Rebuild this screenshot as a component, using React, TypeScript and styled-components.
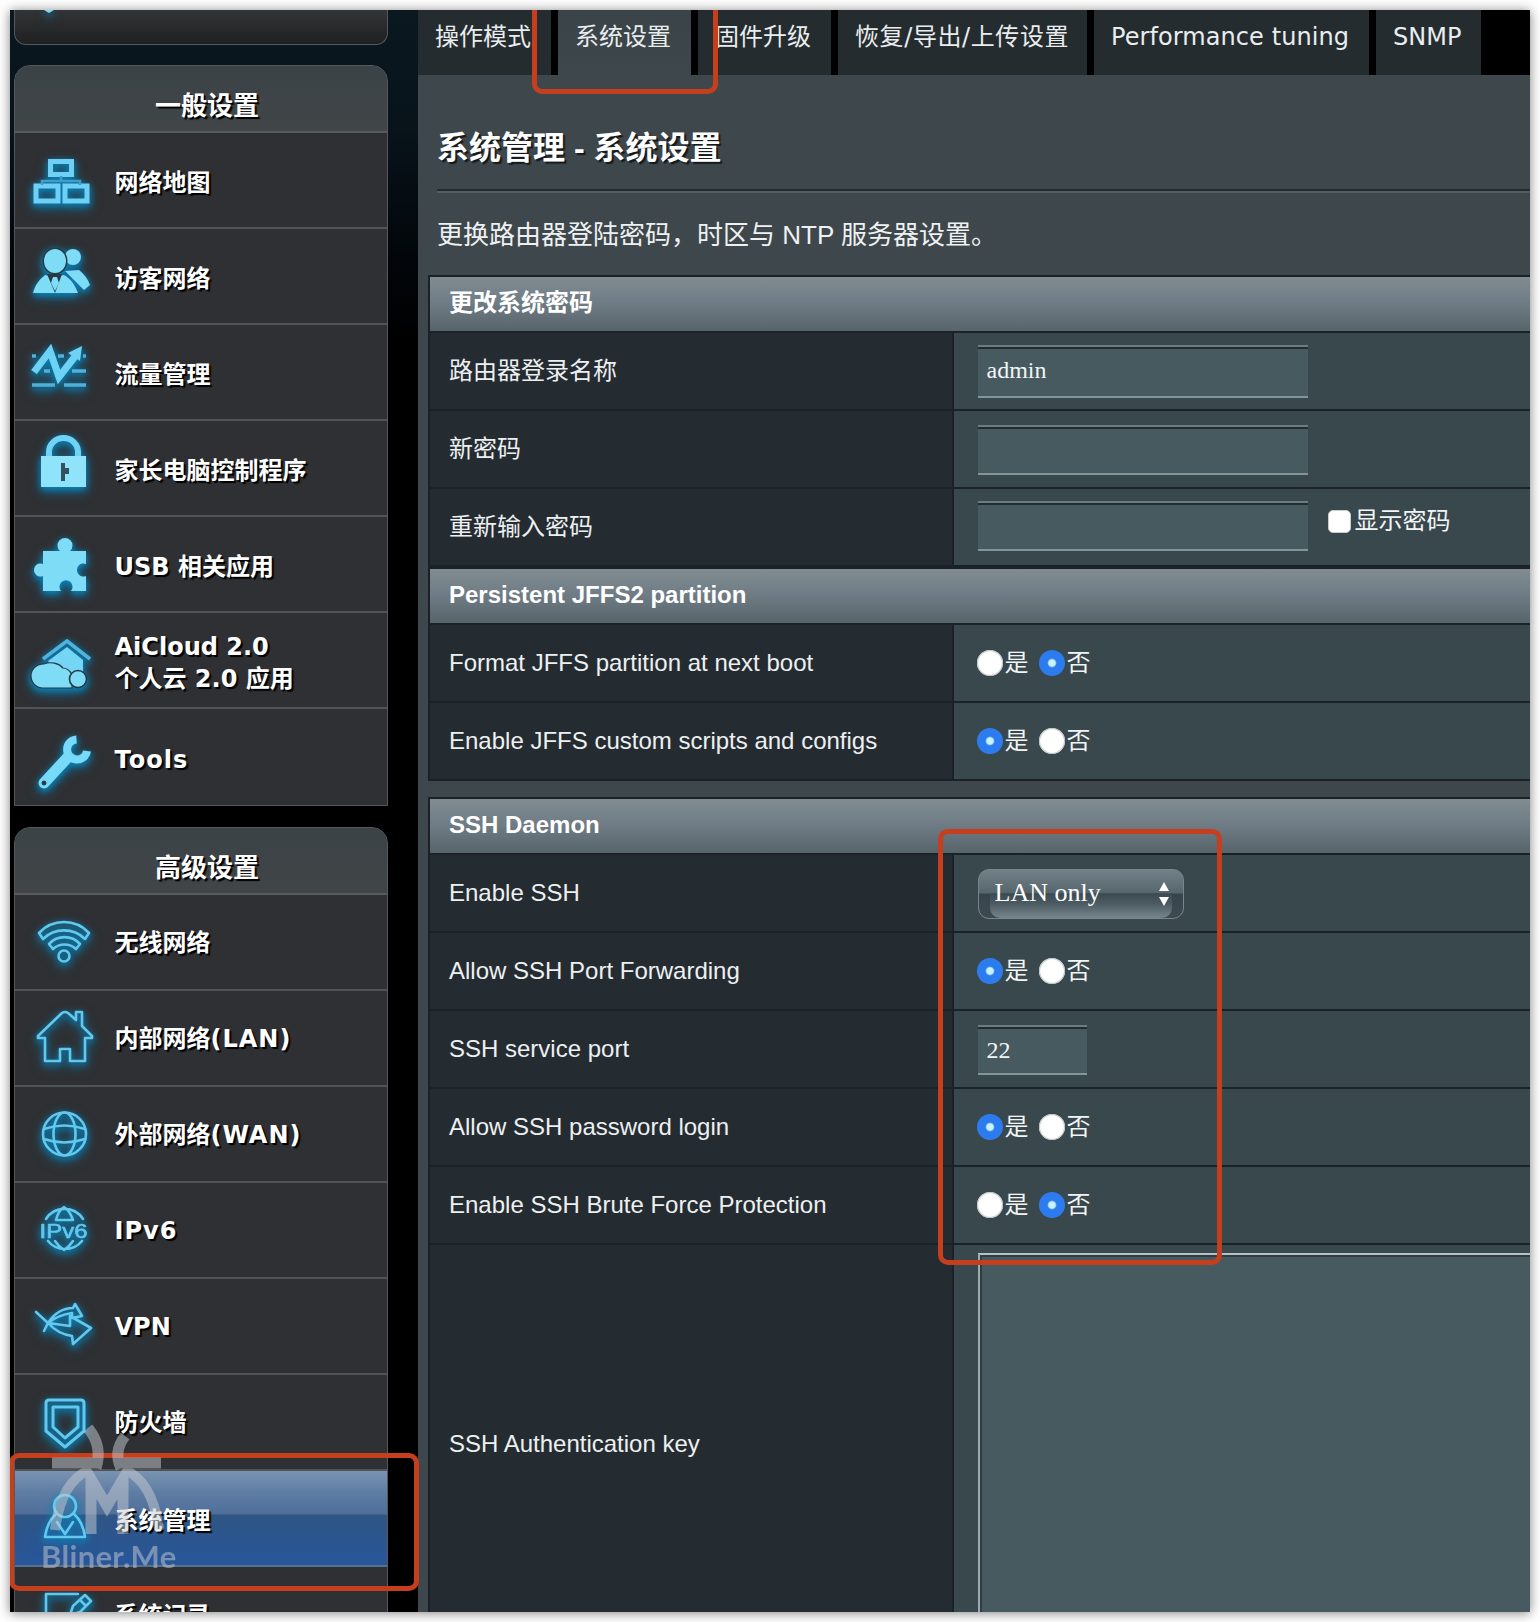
import React from 'react';
import styled, { createGlobalStyle, css } from 'styled-components';

const verdana = `"DejaVu Sans", "Noto Sans CJK SC", sans-serif`;
const arial = `"Liberation Sans", "Noto Sans CJK SC", sans-serif`;
const times = `"Liberation Serif", "Noto Sans CJK SC", serif`;

const GlobalStyle = createGlobalStyle`
  *, *::before, *::after { box-sizing: border-box; }
  html, body { margin: 0; background: #fff; }
  body { overflow: hidden; }
`;

const Page = styled.div`
  width: 1540px;
  height: 1622px;
  padding: 10px;
  overflow: hidden;
`;

const Frame = styled.div`
  position: relative;
  display: flex;
  width: 1520px;
  height: 1602px;
  overflow: hidden;
  background: #000;
  box-shadow: 0 1px 11px rgba(0, 0, 0, 0.5);
`;

/* ---------- sidebar ---------- */

const Sidebar = styled.aside`
  display: flex;
  flex-direction: column;
  flex: none;
  width: 408px;
  padding-left: 4px;
  background: linear-gradient(180deg, #0a181f, #08131a 120px, #02060a 250px, #000 330px);
`;

const Panel = styled.nav`
  flex: none;
  width: 374px;
  border: 1.5px solid #55595c;
  border-radius: 16px 16px 0 0;
  background: #2e3033;
  overflow: hidden;
`;

const TopPanel = styled.div`
  flex: none;
  width: 374px;
  height: 35px;
  margin-bottom: 20px;
  padding-left: 26px;
  border: 1.5px solid #55595c;
  border-top: 0;
  border-radius: 0 0 12px 12px;
  background: linear-gradient(180deg, #323436, #1f2021);
`;

const PanelTitle = styled.div`
  height: 67px;
  padding: 20px 0 0 12px;
  border-bottom: 2px solid #575b5e;
  background: linear-gradient(180deg, #3b4346, #414548);
  color: #fff;
  font: bold 26px/40px ${verdana};
  text-align: center;
  text-shadow: 2px 2px 1px #000;
`;

const Spacer = styled.div`
  flex: none;
  height: 21px;
`;

const Item = styled.a<{ $active?: boolean }>`
  display: flex;
  align-items: center;
  height: 96px;
  padding-left: 5px;
  border-bottom: 2px solid #505457;
  color: #fff;
  font: bold 24px/32px ${verdana};
  text-shadow: 2px 2px 1px #000;
  &:last-child {
    border-bottom: 0;
  }
  ${(p) =>
    p.$active &&
    css`
      background: linear-gradient(180deg, #7993b2 0, #5e7ca3 22px, #4f6f9a 43px, #2f5584 44px, #27569a 94px);
      border-color: #55718f;
    `}
`;

const ItemText = styled.span<{ $nudge: number }>`
  margin-left: 14.5px;
  padding-top: ${(p) => p.$nudge}px;
  white-space: pre;
`;

const Tracked = styled.span`
  letter-spacing: 1px;
`;

const Glyph = styled.svg`
  flex: none;
  width: 80px;
  height: 94px;
  overflow: visible;
  font-weight: normal;
  text-shadow: none;
  filter: drop-shadow(0 2px 3px #0a86bd) drop-shadow(0 3px 5px rgba(0, 130, 190, 0.6));
`;

/* ---------- main ---------- */

const Main = styled.main`
  display: flex;
  flex-direction: column;
  flex: none;
  width: 1112px;
  height: 1602px;
  background: #3e474b;
`;

const Tabs = styled.div`
  display: flex;
  flex: none;
  gap: 7px;
  height: 65px;
  background: #000;
`;

const Tab = styled.a<{ $width: number; $tracking: number; $active?: boolean }>`
  flex: none;
  width: ${(p) => p.$width}px;
  padding: 7px 0 0 17px;
  background: ${(p) => (p.$active ? 'linear-gradient(180deg, #3a4347, #3e474b)' : '#252c30')};
  color: #e9edee;
  font: 24px/40px ${verdana};
  letter-spacing: ${(p) => p.$tracking}px;
  white-space: nowrap;
`;

const Title = styled.h1`
  flex: none;
  margin: 0 0 0 19px;
  height: 116px;
  padding-top: 49px;
  border-bottom: 2px solid #222b30;
  box-shadow: 0 2px 0 #535e64;
  color: #fff;
  font: bold 32px/48px ${arial};
  text-shadow: 2px 2px 1px #14191c;
`;

const Description = styled.p`
  flex: none;
  margin: 0 0 0 19px;
  padding-top: 24px;
  height: 84px;
  color: #eef1f2;
  font: 26px/40px ${arial};
  white-space: nowrap;
`;

const Table = styled.section`
  flex: none;
  margin: 0 0 16px 10px;
  border: 2px solid #1b2227;
  border-right: 0;
  border-bottom: 0;
`;

const SectionHead = styled.h2<{ $spaced?: boolean }>`
  margin: 0;
  height: ${(p) => (p.$spaced ? 58 : 56)}px;
  padding: 0 0 4px 19px;
  border-top: ${(p) => (p.$spaced ? '2px solid #1b2227' : '0')};
  border-bottom: 2px solid #1b2227;
  background: linear-gradient(180deg, #818c91 0, #707d86 45%, #57646a 100%);
  color: #fff;
  font: bold 24px/51px ${arial};
`;

const Row = styled.div<{ $height?: number }>`
  display: grid;
  grid-template-columns: 524px 1fr;
  height: ${(p) => p.$height ?? 78}px;
  border-bottom: 2px solid #1b2227;
`;

const Label = styled.div`
  display: flex;
  align-items: center;
  padding-left: 19px;
  border-right: 2px solid #1b2227;
  background: #252c31;
  color: #edf0f1;
  font: 24px/36px ${arial};
`;

const Value = styled.div`
  display: flex;
  align-items: center;
  padding-left: 23.5px;
  background: #39484d;
  color: #f2f5f5;
  font: 24px/36px ${arial};
`;

const Field = styled.div<{ $width: number; $height?: number; $shift?: number }>`
  width: ${(p) => p.$width}px;
  height: ${(p) => p.$height ?? 50}px;
  margin-top: ${(p) => p.$shift ?? 0}px;
  padding-left: 9px;
  border-top: 2px solid #6c7c81;
  border-bottom: 2px solid #82959a;
  background: #475a60;
  box-shadow: inset 0 2px 0 #222d32;
  color: #f2f5f5;
  font: 24px/46px ${times};
`;

const CheckLabel = styled.label`
  display: flex;
  align-items: center;
  gap: 4px;
  margin: -12px 0 0 20px;
`;

const CheckBox = styled.i`
  width: 23px;
  height: 23px;
  border: 1px solid #c9cdce;
  border-radius: 5px;
  background: #fff;
`;

const Choices = styled.div`
  display: flex;
  margin-left: -1px;
`;

const Choice = styled.label`
  display: flex;
  align-items: center;
  width: 62px;
  gap: 2px;
`;

const Dot = styled.i<{ $on: boolean }>`
  width: 26px;
  height: 26px;
  flex: none;
  border-radius: 50%;
  ${(p) =>
    p.$on
      ? css`
          background: radial-gradient(circle, #c8f2ff 0 3.2px, #2c7cf0 4.8px);
        `
      : css`
          background: #fff;
          box-shadow: inset 0 0 1px 1px #b9c0c2;
        `}
`;

const Select = styled.div`
  display: flex;
  width: 206px;
  height: 50px;
  margin-top: 1px;
  padding: 0 11px;
  border: 1.5px solid #76868c;
  border-radius: 11px;
  background: linear-gradient(180deg, #728187 0, #55666c 23px, #36454b 24px, #3d4b51 47px);
`;

const SelectFace = styled.div`
  display: flex;
  flex: 1;
  align-items: center;
  justify-content: space-between;
  padding: 0 2px 2px 5px;
  border-radius: 0 0 10px 10px;
  background: linear-gradient(180deg, transparent 23px, #3b4b51 24px, #4c5c62 34px, #74838a 47px);
  color: #fff;
  font: 26px/40px ${times};
`;

const Arrows = styled.svg`
  width: 12px;
  height: 26px;
  margin-top: 3px;
`;

const TextArea = styled.div`
  align-self: stretch;
  flex: 1;
  margin-top: 8px;
  border-top: 2px solid #b4c0c4;
  border-left: 2px solid #9cabb0;
  background: #475a60;
  box-shadow: inset 2px 2px 0 #303e44;
`;

/* ---------- overlays ---------- */

const Marker = styled.div<{ $x: number; $y: number; $w: number; $h: number }>`
  position: absolute;
  left: ${(p) => p.$x}px;
  top: ${(p) => p.$y}px;
  width: ${(p) => p.$w}px;
  height: ${(p) => p.$h}px;
  border: 5.5px solid #c53e1d;
  border-radius: 10px;
`;

const Watermark = styled.div`
  position: absolute;
  left: 31px;
  top: 1412px;
  width: 160px;
  opacity: 0.5;
  color: #c8ccd2;
  font: bold 31px/34px Lato, sans-serif;
  letter-spacing: 0.3px;
  & > svg {
    display: block;
    width: 150px;
    height: 117px;
  }
`;

/* Icons share an 80x94 box: light blue fills or outlines with a glow. */
const solid = '#7fdcf7';
const dark = '#263a44';
const outline = { fill: 'none', stroke: '#62c8ee', strokeWidth: 2.6, strokeLinejoin: 'round' as const, strokeLinecap: 'round' as const };

const icons: Record<string, React.ReactNode> = {
  map: (
    <g fill="none" stroke="#6fd0f5" strokeWidth="5">
      <rect x="30.500" y="28.500" width="21" height="13" />
      <rect x="16" y="53" width="22" height="15" />
      <rect x="45" y="53" width="22" height="15" />
      <path d="M41 43v5M22 52v-4h38v4" strokeWidth="2.500" stroke="#3f9fc8" />
    </g>
  ),
  guest: (
    <g fill={solid}>
      <circle cx="53" cy="28" r="8" />
      <path d="M45 42l14-1c5 4 9 9 11 15l-6 5z" />
      <ellipse cx="35" cy="32" rx="12.500" ry="13.500" fill={dark} />
      <ellipse cx="35" cy="32" rx="11" ry="12" />
      <path d="M13 64c2-8 6-13 12-18l10 2 9-2c7 4 11 10 14 18z" />
      <path d="M27 45l8 19 7-19" fill={dark} />
      <path d="M33 48h4l2 6-4 8-4-8z" />
    </g>
  ),
  traffic: (
    <g fill="none" stroke="#6ed2f5" strokeWidth="4.500">
      <path d="M12 31h4M38 31h6M63 31h3M24 46h6M52 46h14M12 60h23M44 60h22" strokeWidth="3.500" stroke="#4fb0da" />
      <path d="M14 47L30 26L39 52L57 29" strokeWidth="7" strokeLinejoin="miter" />
      <path d="M62 21L48 28l12 8z" fill="#6ed2f5" stroke="none" />
    </g>
  ),
  lock: (
    <g>
      <path d="M29 37V31a14.500 14 0 0 1 29 0v6" fill="none" stroke="#70d3f5" strokeWidth="6" />
      <path d="M21 35h45v31H21z" fill="#8fe3fa" />
      <path d="M41 42h4v5h4v6h-4v7h-4z" fill="#34525d" />
    </g>
  ),
  puzzle: (
    <g fill={solid}>
      <path d="M23 34H40a7.500 7.500 0 1 1 10 0H66V47a6.500 6.500 0 1 0 0 12V74H51a6.500 6.500 0 1 0-10 0H23V59a6.500 6.500 0 1 1 0-12z" />
    </g>
  ),
  cloud: (
    <g>
      <path d="M23 46L47 28L70 46" fill="none" stroke="#4fb4dd" strokeWidth="3.500" />
      <path d="M28 48L47 34L63 47V64H40z" fill="#74d5f5" />
      <path d="M22 75a12 12 0 0 1 2-24a15 12 0 0 1 19 4a10 10 0 0 1 9 12v8z" fill={solid} stroke={dark} strokeWidth="1.200" />
      <circle cx="58" cy="66" r="8.500" fill={solid} stroke={dark} strokeWidth="1.600" />
    </g>
  ),
  wrench: (
    <g fill="none" stroke="#77daf8">
      <path d="M56.500 29.500a10 10 0 1 0 10.500 11.500" strokeWidth="8" />
      <path d="M48 47L24 73" strokeWidth="11" strokeLinecap="round" />
      <circle cx="24" cy="73" r="2" fill={dark} stroke={dark} strokeWidth="1" />
    </g>
  ),
  wifi: (
    <g {...outline}>
      <path d="M19 38A34 34 0 0 1 69 38L65 44A30 30 0 0 0 23 44Z" />
      <path d="M29 49A21 21 0 0 1 60 49L56 54A17 17 0 0 0 33 54Z" />
      <circle cx="44" cy="61" r="5.500" />
    </g>
  ),
  home: (
    <g {...outline}>
      <path d="M18 45L42 22q3-2 6 0l8 7v-8h6v14l10 10v2h-7v23H50V58H40v12H25V47H18z" />
    </g>
  ),
  globe: (
    <g {...outline}>
      <circle cx="44.500" cy="47" r="21.500" />
      <ellipse cx="44.500" cy="47" rx="11" ry="21.500" />
      <path d="M24 42q20-7 41 0M24 52q20 7 41 0" />
    </g>
  ),
  ipv6: (
    <g {...outline}>
      <path d="M26 36A22 22 0 0 1 63 36M28 58A22 22 0 0 0 62 58M36 37q2-9 8-13q6 4 9 13M36 37h17M35 58q4 6 9 9q5-3 9-9" />
      <text x="43.500" y="55" fontSize="20" fontFamily="Liberation Sans, sans-serif" textAnchor="middle" textLength="48" lengthAdjust="spacingAndGlyphs" fill="#62c8ee" stroke="#62c8ee" strokeWidth="0.600">
        IPv6
      </text>
    </g>
  ),
  vpn: (
    <g {...outline}>
      <path d="M16 33L28 44Q38 29 53 29L55 25L62 37L52 39V34Q38 36 28 44L24 52" />
      <path d="M28 44L50 47V37L71 49L53 65L52 57Q38 55 28 44" />
    </g>
  ),
  shield: (
    <g {...outline} strokeWidth={3}>
      <path d="M29 25H61q3 0 3 3V56L45 72L26 56V28q0-3 3-3z" />
      <path d="M33 32H58V52L45 63L33 52z" />
    </g>
  ),
  admin: (
    <g {...outline}>
      <circle cx="45" cy="35" r="11" />
      <path d="M36 43q-9 8-11 23H65q-2-15-11-23M37 51l8 12 8-12" />
    </g>
  ),
  log: (
    <g {...outline}>
      <path d="M58 26H26V70H66V50M50 47l3-9 12-11 6 6-11 11zM60 32l6 6" />
    </g>
  ),
};

type Entry = [icon: string, text: string, tracked?: string];

const general: Entry[] = [
  ['map', '网络地图'],
  ['guest', '访客网络'],
  ['traffic', '流量管理'],
  ['lock', '家长电脑控制程序'],
  ['puzzle', 'USB 相关应用'],
  ['cloud', 'AiCloud 2.0\n个人云 2.0 应用'],
  ['wrench', '', 'Tools'],
];

const advanced: Entry[] = [
  ['wifi', '无线网络'],
  ['home', '内部网络', '(LAN)'],
  ['globe', '外部网络', '(WAN)'],
  ['ipv6', '', 'IPv6'],
  ['vpn', 'VPN'],
  ['shield', '防火墙'],
  ['admin', '系统管理'],
  ['log', '系统记录'],
];

const tabs: [text: string, width: number, tracking: number][] = [
  ['操作模式', 133, 0],
  ['系统设置', 133, 0],
  ['固件升级', 133, 0],
  ['恢复/导出/上传设置', 249, 0.6],
  ['Performance tuning', 275, 0.08],
  ['SNMP', 105, 0],
];

const Menu = ({ entries, nudge }: { entries: Entry[]; nudge: number }) => (
  <>
    {entries.map(([icon, text, tracked]) => (
      <Item key={icon} $active={icon === 'admin'}>
        <Glyph viewBox="0 0 80 94">{icons[icon]}</Glyph>
        <ItemText $nudge={icon === 'admin' ? 6 : nudge}>
          {text}
          {tracked && <Tracked>{tracked}</Tracked>}
        </ItemText>
      </Item>
    ))}
  </>
);

const YesNo = ({ yes }: { yes: boolean }) => (
  <Choices>
    <Choice><Dot $on={yes} />是</Choice>
    <Choice><Dot $on={!yes} />否</Choice>
  </Choices>
);

const SettingRow = ({ label, children }: { label: string; children: React.ReactNode }) => (
  <Row>
    <Label>{label}</Label>
    <Value>{children}</Value>
  </Row>
);

export default function App() {
  return (
    <Page>
      <GlobalStyle />
      <Frame>
        <Sidebar>
          <TopPanel>
            <Glyph viewBox="0 0 80 94">
              <path d="M3 0h10l-5 3z" fill={solid} />
            </Glyph>
          </TopPanel>
          <Panel>
            <PanelTitle>一般设置</PanelTitle>
            <Menu entries={general} nudge={6} />
          </Panel>
          <Spacer />
          <Panel>
            <PanelTitle>高级设置</PanelTitle>
            <Menu entries={advanced} nudge={2} />
          </Panel>
        </Sidebar>
        <Main>
          <Tabs>
            {tabs.map(([text, width, tracking], i) => (
              <Tab key={text} $width={width} $tracking={tracking} $active={i === 1}>{text}</Tab>
            ))}
          </Tabs>
          <Title>系统管理 - 系统设置</Title>
          <Description>更换路由器登陆密码，时区与 NTP 服务器设置。</Description>
          <Table>
            <SectionHead>更改系统密码</SectionHead>
            <SettingRow label="路由器登录名称"><Field $width={330} $height={53}>admin</Field></SettingRow>
            <SettingRow label="新密码"><Field $width={330} $shift={2} /></SettingRow>
            <SettingRow label="重新输入密码">
              <Field $width={330} $shift={-2} />
              <CheckLabel><CheckBox />显示密码</CheckLabel>
            </SettingRow>
            <SectionHead $spaced>Persistent JFFS2 partition</SectionHead>
            <SettingRow label="Format JFFS partition at next boot"><YesNo yes={false} /></SettingRow>
            <SettingRow label="Enable JFFS custom scripts and configs"><YesNo yes /></SettingRow>
          </Table>
          <Table>
            <SectionHead>SSH Daemon</SectionHead>
            <SettingRow label="Enable SSH">
              <Select>
                <SelectFace>
                  LAN only
                  <Arrows viewBox="0 0 12 26">
                    <path d="M6 1l5 9H1zM6 25l5-9H1z" fill="#fff" />
                  </Arrows>
                </SelectFace>
              </Select>
            </SettingRow>
            <SettingRow label="Allow SSH Port Forwarding"><YesNo yes /></SettingRow>
            <SettingRow label="SSH service port"><Field $width={109} $shift={2}>22</Field></SettingRow>
            <SettingRow label="Allow SSH password login"><YesNo yes /></SettingRow>
            <SettingRow label="Enable SSH Brute Force Protection"><YesNo yes={false} /></SettingRow>
            <Row $height={400}>
              <Label>SSH Authentication key</Label>
              <Value><TextArea /></Value>
            </Row>
          </Table>
        </Main>
        <Marker $x={522} $y={-20} $w={186} $h={104} />
        <Marker $x={928} $y={819} $w={284} $h={436} />
        <Marker $x={-1} $y={1443} $w={410} $h={138} />
        <Watermark>
          <svg viewBox="0 0 150 117" fill="none" stroke="#c8ccd2">
            <path d="M47 6Q62 24 55 46M84 14Q72 30 80 46" strokeWidth="11" />
            <path d="M11 41H56M76 41H120" strokeWidth="11" />
            <path d="M50 112V57L66 84L82 57V112" strokeWidth="11" />
            <path d="M48 48Q20 60 14 108M84 48Q112 60 118 108" strokeWidth="10" />
          </svg>
          Bliner.Me
        </Watermark>
      </Frame>
    </Page>
  );
}
